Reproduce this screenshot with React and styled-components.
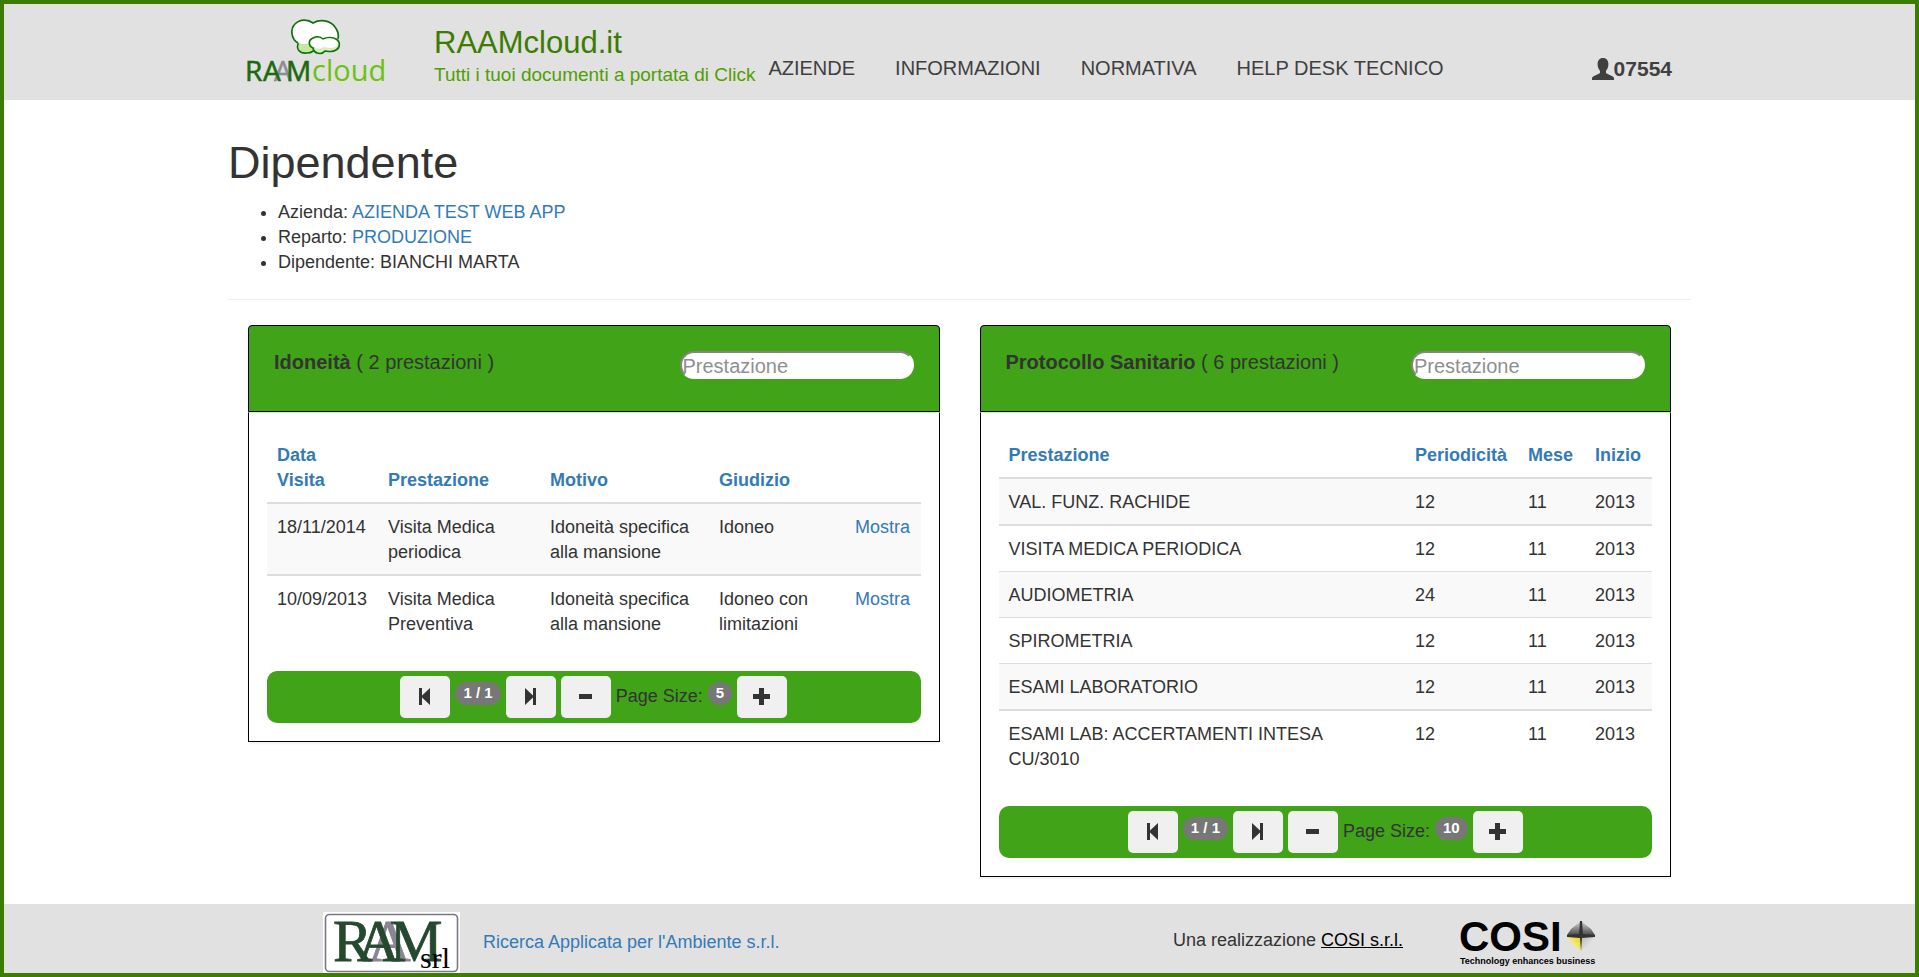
import React from 'react';
import styled, { createGlobalStyle } from 'styled-components';

const GlobalStyle = createGlobalStyle`
    *, *::before, *::after {
        box-sizing: border-box;
    }
    body {
        margin: 0;
        color: #333333;
        background-color: #ffffff;
        font-family: "Liberation Sans", Arial, sans-serif;
        font-size: 18px;
        line-height: 25px;
    }
    a {
        color: #337ab7;
        text-decoration: none;
    }
`;

const Page = styled.div`
    display: flex;
    flex-direction: column;
    min-height: 100vh;
    border: 4px solid #3c7c00;
`;

const Container = styled.div`
    width: 100%;
    max-width: 1463px;
    margin: 0 auto;
`;

const TopBar = styled.header`
    background-color: #e1e1e1;
`;

const TopBarContent = styled(Container)`
    display: flex;
    align-items: flex-start;
    min-height: 96px;
    padding: 11px 19px 0 17px;
`;

const Brand = styled.a`
    display: block;
    margin-right: 44px;

    svg {
        display: block;
        overflow: visible;
    }
`;

const Slogan = styled.div`
    display: flex;
    flex-direction: column;
    gap: 1px;
    padding-top: 10px;
    color: #4f9f00;
`;

const SiteName = styled.span`
    color: #3c7c00;
    font-size: 31px;
    line-height: 36px;
`;

const SiteClaim = styled.span`
    font-size: 19px;
    line-height: 25px;
    white-space: nowrap;
`;

const Nav = styled.nav`
    display: flex;
    flex: 1;
    gap: 40px;
    padding: 41px 0 0 13px;
    font-size: 20px;
    white-space: nowrap;

    a {
        color: #404040;
    }
`;

const UserLink = styled.a`
    display: flex;
    align-items: center;
    padding-top: 41px;
    color: #404040;
    font-size: 21px;
    font-weight: bold;
`;

const Main = styled.main`
    flex: 1;
    padding: 39px 0 24px;
`;

const Title = styled.h1`
    margin: 0 0 13px;
    font-size: 45px;
    font-weight: normal;
    line-height: 48px;
`;

const Details = styled.ul`
    margin: 0;
    padding-left: 50px;
`;

const Divider = styled.hr`
    height: 1px;
    margin: 24px 0 25px;
    border: 0;
    background-color: #eeeeee;
`;

const Columns = styled.div`
    display: grid;
    grid-template-columns: 1fr 1fr;
    gap: 40px;
    align-items: start;
    padding: 0 20px;
`;

const Panel = styled.section`
    border-radius: 4px;
    box-shadow: 0 2px 2px rgba(0, 0, 0, 0.05);
`;

const PanelHeading = styled.div`
    display: flex;
    justify-content: space-between;
    align-items: flex-start;
    min-height: 87px;
    padding: 25px;
    border: 1px solid #000000;
    border-radius: 4px 4px 0 0;
    background-color: #41a317;
`;

const PanelTitle = styled.h2`
    margin: 0;
    font-size: 20px;
    font-weight: normal;
    line-height: 23px;
`;

const SearchInput = styled.input`
    width: 234px;
    height: 28px;
    padding: 2px 1px 0;
    border: 2px solid #8a8484;
    border-right-color: #ffffff;
    border-bottom-color: #ffffff;
    border-radius: 14px;
    background-color: #ffffff;
    font-family: inherit;
    font-size: 20px;

    &::placeholder {
        color: #8f8f8f;
    }
`;

const PanelBody = styled.div`
    padding: 20px 18px 18px;
    border: 1px solid #000000;
    border-top-color: #dddddd;
`;

const Table = styled.table`
    width: 100%;
    margin-bottom: 25px;
    border-spacing: 0;
    table-layout: fixed;

    th, td {
        padding: 11px 10px 9px;
        text-align: left;
        vertical-align: top;
    }
    th {
        vertical-align: bottom;
        padding: 10px 10px 9px;
        color: #337ab7;
        border-bottom: 2px solid #dddddd;
    }
    td {
        border-top: 1px solid #dddddd;
    }
    tbody tr:nth-child(odd) {
        background-color: #f9f9f9;
    }
    tbody tr:nth-child(2) td, tbody tr:last-child td {
        border-top-width: 2px;
    }
    tbody tr:first-child td {
        border-top: 0;
    }
`;

const Col = styled.col`
    width: ${props => props.$size};
`;

const HeadCell = styled.th`
    white-space: nowrap;
`;

const NameCell = styled.td`
    && {
        padding-right: ${props => props.$inset || '10px'};
    }
`;

const PagerBar = styled.div`
    display: flex;
    justify-content: center;
    align-items: center;
    gap: 5px;
    min-height: 52px;
    border-radius: 10px;
    background-color: #41a317;
`;

const PagerButton = styled.button`
    display: flex;
    justify-content: center;
    align-items: center;
    width: 50px;
    height: 42px;
    padding: 0 1px 1px 0;
    border: 0;
    border-radius: 5px;
    color: #333333;
    background-color: #f0f0f0;
    cursor: pointer;
`;

const PagerLabel = styled.span`
    padding-bottom: 2px;
`;

const Badge = styled.span`
    margin-bottom: 7px;
    padding: 3px 8px 4px;
    border-radius: 12px;
    color: #ffffff;
    background-color: #777777;
    font-size: 15px;
    font-weight: bold;
    line-height: 16px;
`;

const Footer = styled.footer`
    background-color: #e1e1e1;
`;

const FooterContent = styled(Container)`
    display: flex;
    justify-content: space-between;
    align-items: flex-start;
    min-height: 69px;
    padding: 8px 94px 0 95px;
`;

const FooterGroup = styled.div`
    display: flex;
    align-items: center;
    gap: ${props => props.$gap};

    svg {
        display: block;
        overflow: visible;
    }
`;

const CosiLink = styled.a`
    color: #000000;
    text-decoration: underline;
`;

const RaamCloudLogo = () => (
    <svg width="145" height="70" viewBox="0 0 145 70" aria-label="RAAMcloud" role="img">
        <path
            d="M54 27C50 34 55 39 62 38C67 38 70 35 71 31L62 24Z"
            fill="#c5e8a0" stroke="#12700f" strokeWidth="1.6"
        />
        <path
            d="M53 28C46 24 45 14 50 9C55 4 63 4 68 8C75 4 85 5 90 12C93 16 94 20 93 25L70 31C65 31 62 27 60 29C57 29 55 29 53 28Z"
            fill="#ffffff"
        />
        <path
            d="M53 28C46 24 45 14 50 9C55 4 63 4 68 8C75 4 85 5 90 12C93 16 94 20 93 24"
            fill="none" stroke="#12700f" strokeWidth="1.7"
        />
        <path
            d="M68 33C63 31 63 25 68 23C72 21 76 22 78 24C82 22 88 22 91 24C96 27 95 33 91 35C87 38 82 36 80 36C77 40 69 39 68 33Z"
            fill="#d6f0bb" stroke="#12700f" strokeWidth="1.6"
        />
        <path
            d="M68 31C65 28 66 25 69 24C72 23 76 23 78 25C82 23 87 23 90 25C94 27 93 31 90 32C86 34 82 32 79 32C75 34 71 34 68 31Z"
            fill="#ffffff"
        />
        <g fontFamily="'Open Sans', sans-serif" fontSize="28">
            <text x="29" y="66" fill="#8f8a96" stroke="#8f8a96" strokeWidth="0.5">A</text>
            <g fill="#1b6b0e" stroke="#1b6b0e" strokeWidth="0.6">
                <text x="0" y="66">R</text>
                <text x="18" y="66">A</text>
                <text x="41" y="66">M</text>
            </g>
            <text x="67" y="66" fontSize="29" fill="#6cc20c">cloud</text>
        </g>
    </svg>
);

const RamSrlLogo = () => (
    <svg width="137" height="61" viewBox="0 0 137 61" aria-label="RAM srl" role="img">
        <rect width="137" height="61" fill="#ffffff" />
        <rect x="2.5" y="2.5" width="132" height="57" rx="4" fill="none" stroke="#7b7587" strokeWidth="1.6" />
        <g fontFamily="'Liberation Serif', serif" fontSize="59">
            <text x="45" y="49" fill="#8b8494" stroke="#8b8494" strokeWidth="1">A</text>
            <g fill="#24492f" stroke="#24492f" strokeWidth="0.8">
                <text x="10" y="49">R</text>
                <text x="34" y="49">A</text>
                <text x="67" y="49">M</text>
            </g>
            <text x="97" y="56" fontSize="30" fill="#000000">srl</text>
        </g>
    </svg>
);

const CosiLogo = () => (
    <svg width="137" height="56" viewBox="0 0 137 56" aria-label="COSI" role="img">
        <defs>
            <linearGradient id="star-top" x1="0" y1="0" x2="0" y2="1">
                <stop offset="0" stopColor="#d8d8d8" />
                <stop offset="1" stopColor="#4a4a4a" />
            </linearGradient>
            <linearGradient id="star-yellow" x1="0" y1="1" x2="1" y2="0">
                <stop offset="0" stopColor="#fffde0" />
                <stop offset="1" stopColor="#e3d512" />
            </linearGradient>
            <linearGradient id="star-white" x1="0" y1="0" x2="1" y2="1">
                <stop offset="0" stopColor="#b5b5b5" />
                <stop offset="1" stopColor="#ffffff" />
            </linearGradient>
        </defs>
        <g fontFamily="'Liberation Sans', Arial, sans-serif" fontWeight="bold" fill="#000000">
            <text x="-1" y="39" fontSize="42">COSI</text>
            <text x="0" y="52" fontSize="9">Technology enhances business</text>
        </g>
        <path d="M121 9L111 17L107 23H121Z" fill="url(#star-top)" />
        <path d="M121 9L131 17L135 23H121Z" fill="url(#star-top)" />
        <path d="M107 24L112 32L121 39V24Z" fill="url(#star-yellow)" />
        <path d="M135 24L130 32L121 39V24Z" fill="url(#star-white)" />
        <path d="M120 9H122L123 22L135 23V25L122 26L121 39L120 26L107 25V23L119 22Z" fill="#333333" />
    </svg>
);

const UserIcon = () => (
    <svg width="22" height="22" viewBox="0 0 22 22" fill="currentColor" aria-hidden="true">
        <path d="M11 0C14.600 0 16.400 2.600 16.400 6.200C16.400 9 15.400 11.200 14 12.800V14.200C14 15 14.400 15.400 15.200 15.800L20.400 18.200C21.500 18.800 22 19.500 22 20.500V22H0V20.500C0 19.500 .5 18.800 1.600 18.200L6.800 15.800C7.600 15.400 8 15 8 14.200V12.800C6.600 11.200 5.600 9 5.600 6.200C5.600 2.600 7.400 0 11 0Z" />
    </svg>
);

const ICONS = {
    first: 'M3 0H6V7.500L14 0V17L6 9.500V17H3Z',
    last: 'M14 0H11V7.500L3 0V17L11 9.500V17H14Z',
    minus: 'M2 6H15V11H2Z',
    plus: 'M6 0H11V6H17V11H11V17H6V11H0V6H6Z',
};

const PagerIcon = ({ name }) => (
    <svg width="17" height="17" viewBox="0 0 17 17" fill="currentColor" aria-hidden="true">
        <path d={ICONS[name]} />
    </svg>
);

const Pager = ({ size }) => (
    <PagerBar>
        <PagerButton type="button" aria-label="Prima pagina"><PagerIcon name="first" /></PagerButton>
        <Badge>1 / 1</Badge>
        <PagerButton type="button" aria-label="Ultima pagina"><PagerIcon name="last" /></PagerButton>
        <PagerButton type="button" aria-label="Riduci"><PagerIcon name="minus" /></PagerButton>
        <PagerLabel>Page Size:</PagerLabel>
        <Badge>{size}</Badge>
        <PagerButton type="button" aria-label="Aumenta"><PagerIcon name="plus" /></PagerButton>
    </PagerBar>
);

const visite = [
    ['18/11/2014', 'Visita Medica periodica', 'Idoneità specifica alla mansione', 'Idoneo'],
    ['10/09/2013', 'Visita Medica Preventiva', 'Idoneità specifica alla mansione', 'Idoneo con limitazioni'],
];

const protocollo = [
    ['VAL. FUNZ. RACHIDE', '12', '11', '2013'],
    ['VISITA MEDICA PERIODICA', '12', '11', '2013'],
    ['AUDIOMETRIA', '24', '11', '2013'],
    ['SPIROMETRIA', '12', '11', '2013'],
    ['ESAMI LABORATORIO', '12', '11', '2013'],
    ['ESAMI LAB: ACCERTAMENTI INTESA CU/3010', '12', '11', '2013'],
];

const IdoneitaPanel = () => (
    <Panel>
        <PanelHeading>
            <PanelTitle><b>Idoneità</b> ( {visite.length} prestazioni )</PanelTitle>
            <SearchInput type="text" placeholder="Prestazione" aria-label="Cerca idoneità" />
        </PanelHeading>
        <PanelBody>
            <Table>
                <colgroup>
                    <Col $size="111px" />
                    <Col $size="162px" />
                    <Col $size="169px" />
                    <Col $size="136px" />
                    <Col $size="auto" />
                </colgroup>
                <thead>
                    <tr>
                        <HeadCell>Data<br />Visita</HeadCell>
                        <HeadCell>Prestazione</HeadCell>
                        <HeadCell>Motivo</HeadCell>
                        <HeadCell>Giudizio</HeadCell>
                        <HeadCell />
                    </tr>
                </thead>
                <tbody>
                    {visite.map(([data, prestazione, motivo, giudizio]) => (
                        <tr key={data}>
                            <td>{data}</td>
                            <NameCell>{prestazione}</NameCell>
                            <td>{motivo}</td>
                            <td>{giudizio}</td>
                            <td><a href="#mostra">Mostra</a></td>
                        </tr>
                    ))}
                </tbody>
            </Table>
            <Pager size={5} />
        </PanelBody>
    </Panel>
);

const ProtocolloPanel = () => (
    <Panel>
        <PanelHeading>
            <PanelTitle><b>Protocollo Sanitario</b> ( {protocollo.length} prestazioni )</PanelTitle>
            <SearchInput type="text" placeholder="Prestazione" aria-label="Cerca protocollo" />
        </PanelHeading>
        <PanelBody>
            <Table>
                <colgroup>
                    <Col $size="auto" />
                    <Col $size="113px" />
                    <Col $size="67px" />
                    <Col $size="67px" />
                </colgroup>
                <thead>
                    <tr>
                        <HeadCell>Prestazione</HeadCell>
                        <HeadCell>Periodicità</HeadCell>
                        <HeadCell>Mese</HeadCell>
                        <HeadCell>Inizio</HeadCell>
                    </tr>
                </thead>
                <tbody>
                    {protocollo.map(([nome, periodicita, mese, inizio]) => (
                        <tr key={nome}>
                            <NameCell $inset="60px">{nome}</NameCell>
                            <td>{periodicita}</td>
                            <td>{mese}</td>
                            <td>{inizio}</td>
                        </tr>
                    ))}
                </tbody>
            </Table>
            <Pager size={10} />
        </PanelBody>
    </Panel>
);

const App = () => (
    <>
        <GlobalStyle />
        <Page>
            <TopBar>
                <TopBarContent>
                    <Brand href="#home"><RaamCloudLogo /></Brand>
                    <Slogan>
                        <SiteName>RAAMcloud.it</SiteName>
                        <SiteClaim>Tutti i tuoi documenti a portata di Click</SiteClaim>
                    </Slogan>
                    <Nav>
                        <a href="#aziende">AZIENDE</a>
                        <a href="#informazioni">INFORMAZIONI</a>
                        <a href="#normativa">NORMATIVA</a>
                        <a href="#helpdesk">HELP DESK TECNICO</a>
                    </Nav>
                    <UserLink href="#utente"><UserIcon />07554</UserLink>
                </TopBarContent>
            </TopBar>
            <Main>
                <Container>
                    <Title>Dipendente</Title>
                    <Details>
                        <li>Azienda: <a href="#azienda">AZIENDA TEST WEB APP</a></li>
                        <li>Reparto: <a href="#reparto">PRODUZIONE</a></li>
                        <li>Dipendente: BIANCHI MARTA</li>
                    </Details>
                    <Divider />
                    <Columns>
                        <IdoneitaPanel />
                        <ProtocolloPanel />
                    </Columns>
                </Container>
            </Main>
            <Footer>
                <FooterContent>
                    <FooterGroup $gap="23px">
                        <RamSrlLogo />
                        <a href="#ram">Ricerca Applicata per l'Ambiente s.r.l.</a>
                    </FooterGroup>
                    <FooterGroup $gap="57px">
                        <span>Una realizzazione <CosiLink href="#cosi">COSI s.r.l.</CosiLink></span>
                        <CosiLogo />
                    </FooterGroup>
                </FooterContent>
            </Footer>
        </Page>
    </>
);

export default App;
